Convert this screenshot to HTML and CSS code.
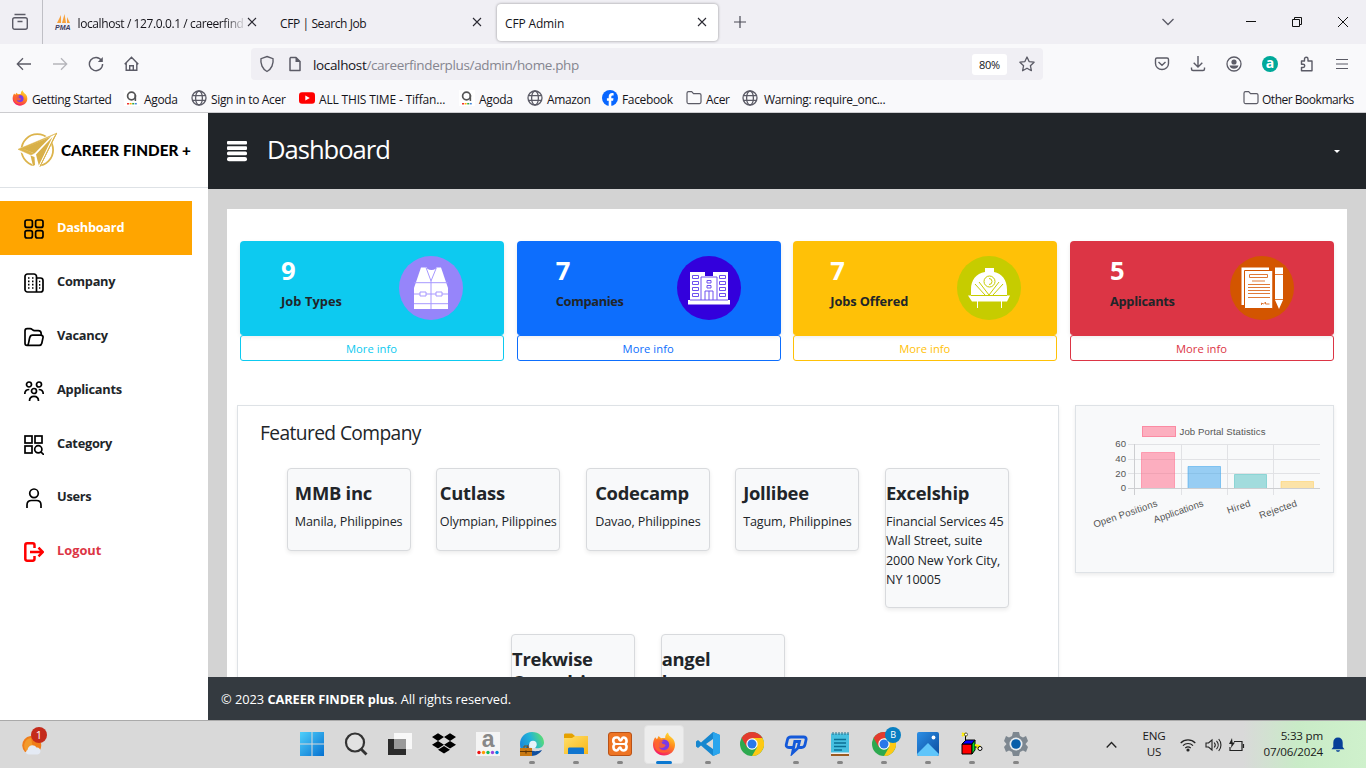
FILE: index.html
```html
<!DOCTYPE html>
<html lang="en">
<head>
<meta charset="utf-8">
<title>CFP Admin</title>
<link rel="stylesheet" href="styles.css">
</head>
<body>
<svg class="defs" width="0" height="0">
  <defs>
    <linearGradient id="gFox" x1="0.8" y1="0" x2="0.3" y2="1"><stop offset="0" stop-color="#ffe536"/><stop offset=".45" stop-color="#ff8a1c"/><stop offset="1" stop-color="#f5156c"/></linearGradient>
    <linearGradient id="gWin" x1="0" y1="0" x2="1" y2="1"><stop offset="0" stop-color="#4fd0fb"/><stop offset="1" stop-color="#0670d0"/></linearGradient>
    <linearGradient id="gEdge" x1="0" y1="0.6" x2="1" y2="0.2"><stop offset="0" stop-color="#1a86d8"/><stop offset=".5" stop-color="#22b4d8"/><stop offset="1" stop-color="#5fe06a"/></linearGradient>
    <linearGradient id="gFold" x1="0" y1="0" x2="1" y2="1"><stop offset="0" stop-color="#ffdf6b"/><stop offset="1" stop-color="#f8b617"/></linearGradient>
    <linearGradient id="gPhoto" x1="0" y1="0" x2="1" y2="1"><stop offset="0" stop-color="#2b8fe6"/><stop offset="1" stop-color="#0d4c9e"/></linearGradient>
    <symbol id="x" viewBox="0 0 10 10"><path d="M1 1l8 8M9 1L1 9" stroke="#2b2a33" stroke-width="1.1" fill="none"/></symbol>
    <symbol id="globe" viewBox="0 0 16 16"><g fill="none" stroke="#5b5b66" stroke-width="1.3"><circle cx="8" cy="8" r="7"/><ellipse cx="8" cy="8" rx="3.4" ry="7"/><path d="M1.5 5.7h13M1.5 10.3h13"/></g></symbol>
    <symbol id="folder" viewBox="0 0 16 16"><path d="M1 3.3C1 2.3 1.7 1.7 2.5 1.7h3.2l1.8 1.9h6c.9 0 1.5.6 1.5 1.5v7c0 .9-.6 1.5-1.5 1.5h-11c-.9 0-1.5-.6-1.5-1.5z" fill="none" stroke="#5b5b66" stroke-width="1.2"/></symbol>
    <symbol id="agoda" viewBox="0 0 16 16"><path fill="#fff" d="M0 0h16v16H0z"/><circle cx="7.500" cy="6" r="3.900" fill="none" stroke="#555" stroke-width="1.700"/><path d="M11.400 5v6" stroke="#555" stroke-width="1.500"/><path d="M3 13.700h2" stroke="#e33" stroke-width="1.500"/><path d="M5.600 13.700h2" stroke="#fa0" stroke-width="1.500"/><path d="M8.200 13.700h2" stroke="#3a4" stroke-width="1.500"/><path d="M10.800 13.700h2" stroke="#48d" stroke-width="1.500"/></symbol>
    <symbol id="fox" viewBox="0 0 24 24"><path d="M3.200 5.200L5 7.200 6.600 4 9 6.300C11 5.600 12 6 13.200 6 13 4 14 1.600 16 .5c.4 2.600 2 4 4 5.500 2.200 1.800 3.200 4.800 3 7.600C22.600 19.500 18 23.500 12 23.500S1.200 19 1 13.300C.9 10.200 1.700 7.300 3.200 5.200z" fill="url(#gFox)"/><circle cx="12" cy="12.800" r="5.300" fill="#7a3ae8"/><path d="M4 8c3-1 6-.2 8 1.200-2.200.2-2.800 1.300-1.700 2.300 1 .9 2.600.5 3.400 1.700-.8 2.600-5 3.700-7.500 1.600C7.500 19 14 20.500 17.500 17c-2 5-12.500 5.500-15-2.500z" fill="#ff652d" opacity=".85"/></symbol>
    <symbol id="chrome" viewBox="0 0 24 24"><circle cx="12" cy="12" r="12" fill="#2da94f"/><path d="M1.600 6l5.200 9 5.200-3V6z" fill="#e33b2e"/><path d="M12 6h10.400A12 12 0 0 1 12 24l5.200-9z" fill="#fdc914"/><path d="M1.600 6A12 12 0 0 1 22.400 6H12z" fill="#e33b2e"/><circle cx="12" cy="12" r="5.700" fill="#fff"/><circle cx="12" cy="12" r="4.500" fill="#2878ea"/></symbol>
  </defs>
</svg>

<div class="tabs">
  <div class="tab-view"><svg width="18" height="18" viewBox="0 0 18 18" fill="none" stroke="#5b5b66" stroke-width="1.400"><rect x="1.700" y="4.700" width="14.600" height="11.600" rx="2"/><path d="M3.500 1.500h11M6.500 8.500h5"/></svg></div>
  <div class="tab tab-pma">
    <svg width="17" height="16" viewBox="0 0 17 16"><path d="M2 9L6 1v8zM7 9L9.500 0 11 9zM12 9V3l3 6z" fill="#f7a13a"/></svg><i class="pma">PMA</i>
    <span class="fade">localhost / 127.0.0.1 / careerfind</span><svg width="10" height="10"><use href="#x"/></svg>
  </div>
  <div class="tab tab-search"><span>CFP | Search Job</span><svg width="10" height="10"><use href="#x"/></svg></div>
  <div class="tab tab-active"><span>CFP Admin</span><svg width="10" height="10"><use href="#x"/></svg></div>
  <svg class="plus" width="12" height="12" viewBox="0 0 12 12"><path d="M6 0v12M0 6h12" stroke="#4a4a55" stroke-width="1.200"/></svg>
  <div class="window-controls">
    <svg width="12" height="8" viewBox="0 0 12 8"><path d="M.5 1L6 6.500 11.500 1" fill="none" stroke="#5b5b66" stroke-width="1.300"/></svg>
    <svg width="10" height="10" viewBox="0 0 10 10"><path d="M0 4.500h10" stroke="#111"/></svg>
    <svg width="10" height="10" viewBox="0 0 10 10" fill="none" stroke="#111"><path d="M.5 2.500h7v7h-7zM2.500 2.500v-2h7v7h-2"/></svg>
    <svg width="10" height="10" viewBox="0 0 10 10"><path d="M0 0l10 10M10 0L0 10" stroke="#111"/></svg>
  </div>
</div>

<div class="navbar">
  <div class="nav-buttons">
    <svg width="16" height="16" viewBox="0 0 16 16" fill="none" stroke="#5b5b66" stroke-width="1.300"><path d="M15 8H1.500M7 2.300L1.300 8 7 13.700"/></svg>
    <svg width="16" height="16" viewBox="0 0 16 16" fill="none" stroke="#b5b5bb" stroke-width="1.300"><path d="M1 8h13.500M9 2.300L14.700 8 9 13.700"/></svg>
    <svg width="16" height="16" viewBox="0 0 16 16" fill="none" stroke="#5b5b66" stroke-width="1.400"><path d="M13.500 4.400A6.600 6.600 0 1 0 14.600 8"/><path d="M14.800 1v5H9.800z" fill="#5b5b66" stroke="none"/></svg>
    <svg width="16" height="16" viewBox="0 0 16 16" fill="none" stroke="#5b5b66" stroke-width="1.400"><path d="M.7 8.300L7.500 1.300l6.800 7M2.200 7v7.300h10.600V7M5.700 14V9.800h3.600V14"/></svg>
  </div>
  <div class="urlbar">
    <svg width="16" height="18" viewBox="0 0 16 18" fill="none" stroke="#5b5b66" stroke-width="1.400"><path d="M8 1.500l6 2.200c.8 5-1.500 10.500-6 12.800C3.500 14.200 1.200 8.700 2 3.700z"/></svg>
    <svg width="14" height="16" viewBox="0 0 14 16" fill="none" stroke="#5b5b66" stroke-width="1.500"><path d="M2.500 1.500H8L12 5.500v9H2v-12z" stroke-linejoin="round"/><path d="M7.500 1v5h5z" fill="#5b5b66" stroke="none"/></svg>
    <span class="url">localhost<span>/careerfinderplus/admin/home.php</span></span>
    <b class="zoom">80%</b>
    <svg width="16" height="16" viewBox="0 0 16 16"><path d="M8 1l2.100 4.600 5 .6-3.700 3.500 1 5L8 12.200l-4.400 2.500 1-5L.9 6.200l5-.6z" fill="none" stroke="#5b5b66" stroke-width="1.300" stroke-linejoin="round"/></svg>
  </div>
  <div class="nav-tools">
    <svg width="16" height="16" viewBox="0 0 16 16" fill="none" stroke="#5b5b66" stroke-width="1.400"><path d="M3 2h10c.9 0 1.500.6 1.500 1.500V7.500a6.500 6 0 0 1-13 0v-4C1.500 2.600 2.100 2 3 2zM4.500 6L8 9.200 11.500 6"/></svg>
    <svg width="16" height="16" viewBox="0 0 16 16" fill="none" stroke="#5b5b66" stroke-width="1.400"><path d="M8 0v11M3.700 6.800L8 11l4.300-4.200M1.500 11.500V13c0 .9.600 1.500 1.500 1.500h10c.9 0 1.500-.6 1.500-1.500v-1.500"/></svg>
    <svg width="16" height="16" viewBox="0 0 16 16"><circle cx="8" cy="8" r="7" fill="none" stroke="#5b5b66" stroke-width="1.300"/><circle cx="8" cy="6" r="2.600" fill="#5b5b66"/><path d="M3.500 9.500h9a4.700 4.500 0 0 1-9 0z" fill="#5b5b66"/></svg>
    <b class="ext">a</b>
    <svg width="16" height="16" viewBox="0 0 16 16" fill="none" stroke="#5b5b66" stroke-width="1.400"><path d="M3.500 5h3V3A1.700 1.700 0 0 1 10 3v2h4v9.700H3.500v-3.200h1.600a1.600 1.600 0 0 0 0-3.300H3.500z" stroke-linejoin="round"/></svg>
    <svg width="12" height="12" viewBox="0 0 12 12"><path d="M0 1.500h12M0 6h12M0 10.500h12" stroke="#5b5b66" stroke-width="1.200"/></svg>
  </div>
</div>

<div class="bookmarks">
  <a><svg width="16" height="16"><use href="#fox"/></svg>Getting Started</a>
  <a><svg width="16" height="16"><use href="#agoda"/></svg>Agoda</a>
  <a><svg width="16" height="16"><use href="#globe"/></svg>Sign in to Acer</a>
  <a class="video"><svg width="16" height="16" viewBox="0 0 16 16"><rect y="2.200" width="16" height="11.600" rx="3" fill="#f00"/><path d="M6.300 5.500v5L10.800 8z" fill="#fff"/></svg>ALL THIS TIME - Tiffan...</a>
  <a><svg width="16" height="16"><use href="#agoda"/></svg>Agoda</a>
  <a><svg width="16" height="16"><use href="#globe"/></svg>Amazon</a>
  <a><svg width="16" height="16" viewBox="0 0 16 16"><circle cx="8" cy="8" r="8" fill="#0866ff"/><path d="M6.700 16v-5.200H4.900V8.200h1.800V7c0-2.600 1.300-3.900 3.500-3.900.5 0 1 .1 1.400.2v2.200h-1C9.600 5.500 9.300 6 9.300 7v1.200h2.200l-.4 2.600H9.300V16z" fill="#fff"/></svg>Facebook</a>
  <a><svg width="16" height="16"><use href="#folder"/></svg>Acer</a>
  <a class="wide"><svg width="16" height="16"><use href="#globe"/></svg>Warning: require_onc...</a>
  <a class="other"><svg width="16" height="16"><use href="#folder"/></svg>Other Bookmarks</a>
</div>

<div class="page">
  <aside class="sidebar">
    <div class="brand">
      <svg width="40" height="36" viewBox="0 0 40 36"><circle cx="19.300" cy="18" r="15.800" fill="none" stroke="#dcb44c" stroke-width="1.800"/><path d="M-1 17.500L40 -1 22 36h-6l-5-10z" fill="#fff"/><path d="M0 17.300L38.700 1.200 30 5.500 6 17l10 4.500-3 1.500z" fill="#dcb44c" stroke="#dcb44c" stroke-width=".5"/><path d="M5 16.700L33 4.500 16.500 21.500z" fill="#d8b048"/><path d="M34.500 5L18 22.500l2.800 11z" fill="#d8b048"/><path d="M38.700 1.200L22 34.500l14-29z" fill="#dcb44c" stroke="#dcb44c"/><path d="M12.500 23.500l4 1.500.5 8-2 1z" fill="#d8b048"/></svg>
      <span>CAREER FINDER +</span>
    </div>
    <nav>
      <a class="active"><svg viewBox="0 0 20 20"><rect x="1" y="1" width="7.400" height="7.400" rx="2"/><rect x="11.600" y="1" width="7.400" height="7.400" rx="2"/><rect x="1" y="11.600" width="7.400" height="7.400" rx="2"/><rect x="11.600" y="11.600" width="7.400" height="7.400" rx="2"/></svg>Dashboard</a>
      <a><svg viewBox="0 0 20 20"><path d="M12.500 19H3.500A2.500 2.500 0 0 1 1 16.500v-13A2.500 2.500 0 0 1 3.500 1h6.500a2.500 2.500 0 0 1 2.500 2.500zM12.500 5h4A2.500 2.500 0 0 1 19 7.500v9a2.500 2.500 0 0 1-2.500 2.500h-4"/><path d="M4 5h1.500M8 5h1.500M4 8.300h1.500M8 8.300h1.500M4 11.600h1.500M8 11.600h1.500M4 15h1.500M8 15h1.500M15 8.500h1.300M15 11.800h1.300M15 15h1.300"/></svg>Company</a>
      <a><svg viewBox="0 0 20 20"><path d="M3 18.300C1.800 18.300 1 17.500 1 16.200V4C1 2.700 2 1.700 3.200 1.700h3c2 0 2.300 2 4.300 2h3.700c1.800 0 3 1.200 3 3V8M3 18.300c1.700 0 1.300-1.300 2.600-7.300C6.200 8.600 7 8.200 8.500 8.200h8.300c1.600 0 2.500 1 2.200 2.500l-1.200 5.600c-.3 1.300-1.200 2-2.500 2z"/></svg>Vacancy</a>
      <a><svg viewBox="0 0 20 20"><circle cx="5" cy="3.500" r="2.500"/><circle cx="15" cy="3.500" r="2.500"/><circle cx="10" cy="10" r="2.500"/><path d="M.8 13c0-3.500 1.500-4.500 4.500-4.500M19.200 13c0-3.500-1.500-4.500-4.500-4.500M5.500 20c0-3.500 1.500-4.700 4.500-4.700s4.500 1.200 4.500 4.700"/></svg>Applicants</a>
      <a><svg viewBox="0 0 20 20"><rect x="1" y="1" width="7" height="7"/><rect x="11" y="1" width="7" height="7"/><rect x="1" y="11" width="7" height="7"/><circle cx="14.300" cy="14.300" r="3.600"/><path d="M17 17l3 3"/></svg>Category</a>
      <a><svg viewBox="0 0 20 20"><circle cx="10" cy="5.300" r="4.300"/><path d="M3 20v-3c0-3 1.500-4.500 4.500-4.500h5c3 0 4.500 1.500 4.500 4.500v3"/></svg>Users</a>
      <a class="logout"><svg viewBox="0 0 20 20"><path d="M10.500 6V3.200C10.500 2 9.800 1.300 8.700 1.300H3.200C2 1.300 1.300 2 1.300 3.200v13.600c0 1.200.7 1.900 1.900 1.900h5.500c1.100 0 1.800-.7 1.800-1.900V14M6 10h12.500M14.500 5.700L18.800 10l-4.300 4.300"/></svg>Logout</a>
    </nav>
  </aside>
  <main>
    <header>
      <svg width="20" height="21" viewBox="0 0 20 21" fill="#fff"><rect width="20" height="3.400" rx="1"/><rect y="5.300" width="20" height="3.600" rx="1"/><rect y="10.500" width="20" height="3.700" rx="1.500"/><rect y="16" width="20" height="4.300" rx="2"/></svg>
      <h1>Dashboard</h1>
      <i class="caret"></i>
    </header>
    <section class="panel">
      <div class="stats">
        <div class="stat types"><div class="tile"><div><strong>9</strong><b>Job Types</b></div>
          <svg viewBox="0 0 64 64"><circle cx="32" cy="32" r="32" fill="#9685fa"/><path d="M22 11.500h20l7 20.500v21H15V32z" fill="#fff"/><path d="M27 11.500l5 13.500 5.500-13.500M32 25v28M15 26.700h34M15 38h34M15 47.700h34" fill="none" stroke="#a798ff"/><path d="M28 10.500h9v2q-4.500 3-9 0z" fill="#9685fa"/><path d="M21 36h6v4h-6zM37 36h6v4h-6z" fill="#fff" stroke="#a798ff"/></svg></div><a>More info</a></div>
        <div class="stat companies"><div class="tile"><div><strong>7</strong><b>Companies</b></div>
          <svg viewBox="0 0 64 64"><circle cx="32" cy="32" r="32" fill="#3300dc"/><path d="M13 16h15v4h8v-4h15v28h2v4.500H11V44h2z" fill="#fff"/><g fill="none" stroke="#6e50f0"><path d="M24 44V21h16v23M28 44V35h8v9M32 35v9M13 44h38"/><path d="M15.500 19.500h6v3h-6zM15.500 25.500h6v3h-6zM15.500 31.500h6v3h-6zM15.500 37.500h6v3h-6zM42.500 19.500h6v3h-6zM42.500 25.500h6v3h-6zM42.500 31.500h6v3h-6zM42.500 37.500h6v3h-6zM30 24.500h4v2.500h-4zM30 29.500h4v2.500h-4z"/></g></svg></div><a>More info</a></div>
        <div class="stat offered"><div class="tile"><div><strong>7</strong><b>Jobs Offered</b></div>
          <svg viewBox="0 0 64 64"><circle cx="32" cy="32" r="32" fill="#c6cc00"/><path d="M28 12h9v4c8 1.500 13 8 13 17.500v6h3l-3 6H15l-4-6h3v-6C14 24 19 17.500 28 16z" fill="#fff"/><g fill="none" stroke="#c6cc00"><circle cx="32.500" cy="25.500" r="5.500"/><path d="M32 22.500a3 3 0 1 1 0 6M14 39.500h36M18 28l10 11M22 26l10 13 10-13M46 28L36 39"/></g><path d="M20.500 45v7M44.500 45v7" stroke="#fff"/></svg></div><a>More info</a></div>
        <div class="stat applicants"><div class="tile"><div><strong>5</strong><b>Applicants</b></div>
          <svg viewBox="0 0 64 64"><circle cx="32" cy="32" r="32" fill="#d35500"/><path d="M11.500 11.500H39V49H11.500zM45 11.500h8V44l-4 9-4-9z" fill="#fff"/><path d="M14.500 14.500h28.300v38H14.500z" fill="#fff" stroke="#d35500"/><g fill="none" stroke="#df7a38"><path d="M19.500 18.500h18v3h-18zM22 25h13M18 28.500h22M18 31.500h22M18 34.500h22M18 37.500h22M18 41.500h22M31.500 49v-2l2 1 2-2v2h4M45 18.500h8M45 43.500h8"/></g></svg></div><a>More info</a></div>
      </div>
      <div class="lower">
        <div class="featured">
          <h2>Featured Company</h2>
          <div class="cards">
            <div class="card"><div><h3>MMB inc</h3><p>Manila, Philippines</p></div></div>
            <div class="card"><div><h3>Cutlass</h3><p>Olympian, Pilippines</p></div></div>
            <div class="card"><div><h3>Codecamp</h3><p>Davao, Philippines</p></div></div>
            <div class="card"><div><h3>Jollibee</h3><p>Tagum, Philippines</p></div></div>
            <div class="card full"><div><h3>Excelship</h3><p>Financial Services 45<br>Wall Street, suite<br>2000 New York City,<br>NY 10005</p></div></div>
            <div class="card full"><div><h3>Trekwise<br>Consulting</h3></div></div>
            <div class="card full"><div><h3>angel<br>burger</h3></div></div>
          </div>
        </div>
        <div class="chart">
          <svg width="257" height="166" viewBox="1076 406 257 166">
            <rect x="1142.500" y="426.500" width="33" height="10" fill="#fcafbf" stroke="#fb8ba3"/>
            <text x="1179.500" y="435" textLength="86">Job Portal Statistics</text>
            <g class="axis"><text x="1126" y="447">60</text><text x="1126" y="462">40</text><text x="1126" y="477">20</text><text x="1126" y="491">0</text></g>
            <path d="M1128 444.500h192M1128 459.500h192M1128 473.500h192M1181.500 444v51M1227.500 444v51M1273.500 444v51" stroke="#e1e2e5" fill="none"/>
            <path d="M1134.500 444v51M1128 488.500h192" stroke="#cdced1" fill="none"/>
            <g stroke-width="1"><path d="M1141.500 488v-35.500h33V488" fill="#ff638480" stroke="#ff638480"/><path d="M1188 488v-21.500h32.500V488" fill="#36a2eb80" stroke="#36a2eb80"/><path d="M1234.500 488v-13.500h32V488" fill="#4bc0c080" stroke="#4bc0c080"/><path d="M1281 488v-6.500h32.500V488" fill="#ffce5680" stroke="#ffce5680"/></g>
            <g class="axis"><text transform="translate(1158 506) rotate(-19)" textLength="67">Open Positions</text><text transform="translate(1204 506) rotate(-19)" textLength="52">Applications</text><text transform="translate(1251 506) rotate(-19)" textLength="24">Hired</text><text transform="translate(1297.500 506) rotate(-19)" textLength="39">Rejected</text></g>
          </svg>
        </div>
      </div>
    </section>
    <footer>© 2023 <b>CAREER FINDER plus</b>. All rights reserved.</footer>
  </main>
</div>

<div class="taskbar">
  <div class="weather"><svg width="26" height="26" viewBox="0 0 26 26"><path d="M4 20A9.500 9.500 0 1 1 19 18z" fill="#ef7d1a"/><path d="M10 6a8 8 0 0 0-5 13l8 2z" fill="#f39a2b"/><path d="M8 22.500c-3 0-4-3-1.500-4.500C7 13 13 11.500 15.500 15.500c4-1 6 6 1 7z" fill="#e4eaf4"/></svg><b>1</b></div>
  <div class="apps">
    <a><svg viewBox="0 0 24 24"><path d="M0 0h11.500v11.500H0zM12.500 0H24v11.500H12.500zM0 12.500h11.500V24H0zM12.500 12.500H24V24H12.500z" fill="url(#gWin)"/></svg></a>
    <a><svg viewBox="0 0 24 24"><circle cx="11" cy="10.500" r="9" fill="#e2e2e2" stroke="#333" stroke-width="2.200"/><path d="M17.500 17.500l5 5" stroke="#333" stroke-width="2.800"/></svg></a>
    <a><svg viewBox="0 0 24 24"><path d="M6 1h18v16H6z" fill="#f8f8f8"/><path d="M0 7h18v16H0z" fill="#2b2b2b"/><path d="M6 7h12v10H6z" fill="#9a9a9a"/></svg></a>
    <a><svg viewBox="0 0 24 24"><path d="M6 1.300l6 3.800-6 3.800-6-3.800zM18 1.300l6 3.800-6 3.800-6-3.800zM6 9l6 3.800-6 3.800-6-3.800zM18 9l6 3.800-6 3.800-6-3.800zM12 14l6 3.800-6 3.800-6-3.800z"/></svg></a>
    <a class="amazon"><b>a</b><svg viewBox="0 0 24 6"><circle cx="3" cy="2.500" r="1.700" fill="#e11"/><circle cx="7.500" cy="2.500" r="1.700" fill="#f90"/><circle cx="12" cy="2.500" r="1.700" fill="#1b5"/><circle cx="16.500" cy="2.500" r="1.700" fill="#94d"/><circle cx="21" cy="2.500" r="1.700" fill="#08d"/></svg></a>
    <a class="run"><svg viewBox="0 0 24 24"><path d="M0 12C0 5 5 0 12 0s12 5 12 10.500c0 5-5 6.500-9 5.500 1-2 0-5-3-5-4 0-6 6-3 13C4 23 0 19 0 12z" fill="url(#gEdge)"/><path d="M9 12c-2 6 4 9 13 6-3 5-8 6-12 6-5-3-5-9-1-12z" fill="#104f9e"/><circle cx="13" cy="12.500" r="3.700" fill="#e7f3fa"/><path d="M0 16h12v8H0z" fill="#c87914"/><path d="M0 19.500h12M6 18.500v3" stroke="#5b3305" stroke-width="1.200"/><path d="M4 16v-2h4v2" stroke="#8a5109" fill="none"/></svg></a>
    <a class="run"><svg viewBox="0 0 24 24"><path d="M0 3c0-1 .5-1.500 1.500-1.500H8L11 4h13v18H0z" fill="#e5a100"/><path d="M0 6h8l3-2h13v18H0z" fill="url(#gFold)"/><path d="M4 22v-5c0-1 .5-1.500 1.500-1.500h13c1 0 1.500.5 1.500 1.500v5z" fill="#1075cf"/></svg></a>
    <a class="run"><svg viewBox="0 0 24 24"><rect x=".5" y=".5" width="23" height="23" rx="2.500" fill="#ee7423" stroke="#b95217"/><path d="M8 5.500h1.500c2 0 1.500 3 3 3s1-3 3-3c3.500 0 4 5 1.500 6.500 2.500 1.500 2 6.500-1.500 6.500s-2-3-3.500-3-1.500 3-3.500 3c-3.500 0-4-5-1.500-6.500-2.500-1.500-2.500-6.500 1-6.500z" fill="none" stroke="#fff" stroke-width="2.600"/><path d="M8 12h8" stroke="#fff" stroke-width="2"/></svg></a>
    <a class="run current"><svg viewBox="0 0 24 24"><use href="#fox"/></svg></a>
    <a class="run"><svg viewBox="0 0 24 24"><path d="M17 0l7 3v18l-7 3L5 13.500 2 16l-2-1.500V9.500L2 8l3 2.500zM17 7l-7 5 7 5z" fill="#1787cf" fill-rule="evenodd"/><path d="M17 0l7 3v18l-7 3z" fill="#2aa5ed"/></svg></a>
    <a><svg viewBox="0 0 24 24"><use href="#chrome"/></svg></a>
    <a class="run"><svg viewBox="0 0 24 24"><path d="M9 15.500H5C2.500 15.500 2 14 2.300 12.500L3.500 7.500c.5-2 1.500-2.500 3.500-2.500h12.500c2 0 3 1 2.500 3l-1 4.500c-.5 2.500-1.500 3-3.500 3H14l1.500-6h-4.700L8.500 21l6-5.500" fill="none" stroke="#1459d9" stroke-width="2.800"/></svg></a>
    <a class="run"><svg viewBox="0 0 24 24"><path d="M3 1.500h18V22H3z" fill="#46bfe0"/><path d="M3 21h18v3H3z" fill="#9a5b21"/><path d="M3 20.500h18V22H3z" fill="#eee"/><path d="M6 7.500h12M6 11h12M6 14.500h12M6 18h8" stroke="#0b6f94" stroke-width="1.500"/><path d="M5 0v3M8 0v3M11 0v3M14 0v3M17 0v3M20 0v3" stroke="#26708c"/></svg></a>
    <a class="run"><svg viewBox="0 0 24 24"><use href="#chrome"/></svg><b class="profile">B</b></a>
    <a class="run"><svg viewBox="0 0 24 24"><rect x="1" width="22" height="24" rx="2" fill="url(#gPhoto)"/><path d="M1 22L12 11l11 11c0 1-1 2-2 2H3c-1 0-2-1-2-2z" fill="#5fc5fa"/><circle cx="17.500" cy="5.500" r="1.900" fill="#fff"/></svg></a>
    <a class="run"><svg viewBox="0 0 24 24"><path d="M2 12h10v10H2z" fill="#f00" stroke="#000"/><path d="M2 12l4-4h9l-3 4z" fill="#00f" stroke="#000"/><path d="M12 12l3-4v10l-3 4z" fill="#0d2" stroke="#000"/><path d="M5.500 9V4M15 15h4" stroke="#000"/><path d="M2 1l5 3M2 4l4-3" stroke="#fe0" stroke-width="2"/><circle cx="6" cy="2.500" r="1.500" fill="#fff" stroke="#000" stroke-width=".6"/><path d="M15 13l4 1-2 3" fill="none" stroke="#fe0" stroke-width="2"/><circle cx="20" cy="16.500" r="2" fill="#fff" stroke="#000"/></svg></a>
    <a class="run"><svg viewBox="0 0 24 24"><path d="M9 0h6l1 4 3 1.500L22 4l2 5-2.500 3 2.500 3-2 5-3-1.500L16 20l-1 4H9l-1-4-3-1.500L2 20l-2-5 2.500-3L0 9l2-5 3 1.500L8 4z" fill="#7d8790"/><circle cx="12" cy="12" r="6.500" fill="#e9edf0"/><circle cx="12" cy="12" r="4.800" fill="#075eaa"/></svg></a>
  </div>
  <div class="tray">
    <svg width="11" height="8" viewBox="0 0 11 8"><path d="M.7 6.500l4.800-5 4.800 5" fill="none" stroke="#222" stroke-width="1.300"/></svg>
    <span class="lang">ENG<br>US</span>
    <svg width="16" height="14" viewBox="0 0 16 14" fill="none" stroke="#222" stroke-width="1.200"><path d="M.7 5a10.300 10.300 0 0 1 14.600 0M3 7.600a7 7 0 0 1 10 0M5.300 10a4 4 0 0 1 5.400 0"/><circle cx="8" cy="12" r="1" fill="#222"/></svg>
    <svg width="17" height="14" viewBox="0 0 17 14" fill="none" stroke="#222" stroke-width="1.100"><path d="M1 5v4h2.500L7 12V2L3.500 5zM9.200 4.500c1.300 1.500 1.300 3.500 0 5M11.500 2.800c2.200 2.500 2.200 6 0 8.400M13.700 1c3 3.500 3 8.500 0 12"/></svg>
    <svg width="17" height="14" viewBox="0 0 17 14" fill="none" stroke="#222" stroke-width="1.200"><path d="M6 3.500h8v9H2V9M15.500 6v4"/><path d="M4 0L1 6h2.500L3 10l4-5.500H4.500z" fill="#222" stroke="none"/></svg>
    <span class="clock">5:33 pm<br>07/06/2024</span>
    <svg width="14" height="16" viewBox="0 0 14 16"><path d="M7 .5c3 0 4.700 2 4.700 5V10l1.800 2.300H.5L2.300 10V5.500C2.300 2.500 4 .5 7 .5zM5 13.300h4c-.4 2-3.600 2-4 0z" fill="#063f98"/></svg>
  </div>
</div>
</body>
</html>
```
FILE: styles.css
```css
* { box-sizing: border-box; }
body { margin: 0; width: 1366px; height: 768px; overflow: hidden; font: 12px "Open Sans", "Noto Sans", sans-serif; color: #15141a; display: flex; flex-direction: column; white-space: nowrap; }
svg { display: block; flex: none; }
.defs { position: absolute; }
h1, h2, h3, p { margin: 0; }

.tabs { height: 44px; flex: none; background: #f0eff4; display: flex; align-items: center; letter-spacing: -.4px; }
.tab-view { width: 43px; height: 44px; padding: 13px 0 0 11px; border-right: 1px solid #bfbfc5; }
.tab { display: flex; align-items: center; justify-content: space-between; height: 38px; }
.tab span { padding-top: 2px; }
.tab-pma { position: relative; width: 214px; padding-left: 12px; margin-right: 23px; }
.tab-pma .fade { width: 169px; margin-left: 5px; -webkit-mask-image: linear-gradient(90deg, #000 86%, transparent); mask-image: linear-gradient(90deg, #000 86%, transparent); }
.pma { position: absolute; left: 12px; top: 20px; font: italic 900 7px/9px "Liberation Sans", sans-serif; letter-spacing: 0; color: #3f3c60; }
.tab-search { width: 202px; margin-right: 15px; }
.tab-active { width: 221px; height: 37px; padding: 0 11px 0 8px; background: #fff; border-radius: 4px; box-shadow: 0 0 3px rgba(0,0,0,.4); }
.tab-active span { letter-spacing: -.15px; }
.plus { margin-left: 16px; }
.window-controls { margin-left: auto; display: flex; align-items: center; padding-right: 18px; }
.window-controls svg + svg { margin-left: 36px; }
.window-controls svg:nth-child(2) { margin-left: 72px; }

.navbar { height: 40px; flex: none; background: #f9f9fb; display: flex; align-items: center; }
.nav-buttons { display: flex; gap: 20px; padding-left: 16px; width: 251px; }
.urlbar { width: 792px; height: 32px; border-radius: 4px; background: #f0eff4; display: flex; align-items: center; padding: 0 8px; font-size: 13.500px; letter-spacing: -.35px; }
.urlbar svg + svg { margin-left: 13px; }
.url { margin-left: 11px; flex: 1; padding-top: 2px; }
.url span { color: #85858f; }
.zoom { width: 35px; height: 21px; border-radius: 3px; background: #fff; font: 11px/21px "Open Sans", sans-serif; text-align: center; letter-spacing: -.3px; margin-right: 12px; }
.nav-tools { margin-left: 111px; display: flex; align-items: center; gap: 20px; }
.nav-tools svg:last-child { margin-left: 2px; }
.ext { width: 16px; height: 16px; border-radius: 8px; background: #00a99a; color: #fff; font: bold 14px/14px "Open Sans", sans-serif; text-align: center; }

.bookmarks { height: 29px; flex: none; background: #f9f9fb; border-bottom: 1px solid #cccccf; display: grid; grid-template-columns: 112px 67px 108px 160px 68px 75px 84px 56px 501px 112px; padding: 2px 0 0 12px; align-items: center; letter-spacing: -.35px; }
.bookmarks a { display: flex; align-items: center; gap: 4px; }
.bookmarks svg { margin-top: -2px; }
.bookmarks .wide { gap: 6px; }
.bookmarks .video { letter-spacing: -.17px; }
.bookmarks .other { gap: 3px; letter-spacing: -.48px; }

.page { height: 607px; flex: none; display: flex; }
.sidebar { width: 208px; background: #fff; }
.brand { height: 75px; border-bottom: 1px solid #dee2e6; padding-left: 18px; display: flex; align-items: center; font: 900 15.300px "Lato", sans-serif; color: #000; }
.brand span { margin-left: 3px; letter-spacing: 0; }
.sidebar nav { padding-top: 13px; display: grid; grid-auto-rows: 53.900px; width: 192px; }
.sidebar nav a { padding: 0 0 2px 24px; display: flex; align-items: center; gap: 13px; font-size: 12.800px; font-weight: bold; color: #212529; letter-spacing: -.27px; }
.sidebar nav svg { width: 20px; height: 20px; margin-top: 4px; fill: none; stroke: #000; stroke-width: 1.700; }
.sidebar nav .active { background: orange; color: #fff; }
.sidebar nav .logout { color: #dc3545; letter-spacing: 0; }
.sidebar nav .logout svg { stroke: red; stroke-width: 2.500; }

main { width: 1158px; background: #d3d3d3; display: flex; flex-direction: column; color: #212529; }
header { height: 76px; flex: none; background: #212529; color: #fff; display: flex; align-items: center; padding: 0 26px 0 19px; }
header h1 { font-size: 25.600px; font-weight: 400; margin: -2px 0 0 20px; line-height: 40px; letter-spacing: -1.030px; }
.caret { margin-left: auto; border: 3px solid transparent; border-top-color: #fff; border-bottom: 0; }
.panel { margin: 20px 19px 0; height: 468px; flex: none; overflow: hidden; background: #fff; padding: 32px 10px 0; }
.stats { display: grid; grid-template-columns: repeat(4, 264px); justify-content: space-between; padding: 0 3px; }
.tile { height: 94px; border-radius: 4px 4px 3px 3px; background: var(--c); display: grid; grid-template-columns: var(--icon) 64px; padding: 15px 0 0 var(--left); box-shadow: 0 2px 4px rgba(0,0,0,.08); }
.tile svg { width: 64px; height: 64px; }
.tile strong { display: block; font-size: 25.600px; line-height: 30px; color: #fff; }
.tile b { display: block; font-size: 12.800px; line-height: 20px; margin-top: 5px; letter-spacing: -.1px; }
.stat a { display: block; height: 26px; border: 1px solid var(--c); border-radius: 3px; color: var(--c); text-align: center; font-size: 11.200px; line-height: 26px; padding-right: 1px; letter-spacing: .05px; }
.types { --c: #0dcaf0; --left: 41px; --icon: 118px; }
.types b { letter-spacing: .08px; }
.companies { --c: #0d6efd; --left: 39px; --icon: 121px; }
.companies b { letter-spacing: -.3px; }
.offered { --c: #ffc107; --left: 37px; --icon: 127px; }
.applicants { --c: #dc3545; --left: 40px; --icon: 120px; }
.applicants b { letter-spacing: -.28px; }
.lower { display: flex; justify-content: space-between; align-items: flex-start; margin-top: 44px; padding-right: 3px; }
.featured { width: 822px; height: 400px; border: 1px solid #dee2e6; box-shadow: 0 2px 4px rgba(0,0,0,.06); padding-top: 13px; }
.featured h2 { margin-left: 22px; font-size: 19.200px; line-height: 27px; height: 28px; font-weight: 400; letter-spacing: -.6px; }
.cards { display: flex; flex-wrap: wrap; justify-content: center; align-items: flex-start; padding: 8px .3px 0 0; }
.card { width: 124px; margin: 12.800px; min-height: 83px; border: 1px solid #d8dadd; border-radius: 4px; background: #f8f9fa; box-shadow: 0 2px 4px rgba(0,0,0,.08); padding: 13px 0 18px; display: flex; justify-content: center; }
.card h3 { font-size: 18.400px; line-height: 22.500px; letter-spacing: -.25px; margin-bottom: 7.500px; }
.card p { font-size: 12.600px; line-height: 19.400px; letter-spacing: -.13px; }
.card.full { justify-content: flex-start; }
.chart { width: 259px; height: 168px; border: 1px solid #dee2e6; background: #f8f9fa; box-shadow: 0 2px 4px rgba(0,0,0,.08); }
.chart text { font: 9.600px "Liberation Sans", sans-serif; fill: #555; }
.chart .axis text { text-anchor: end; }
footer { height: 43px; flex: none; background: #343a40; color: #fff; padding: 1px 0 0 13px; font-size: 12.800px; line-height: 43px; letter-spacing: -.02px; }
footer b { letter-spacing: -.1px; }

.taskbar { height: 48px; flex: none; border-top: 1px solid #aaa; background: linear-gradient(90deg, #d9d9d9 91%, #c9ebc7 95%, #cff1cc); display: flex; align-items: center; }
.weather { position: relative; width: 290px; padding-left: 21px; }
.weather b { position: absolute; left: 31px; top: -5px; width: 16px; height: 16px; border-radius: 8px; background: #c42b1c; color: #fff; font: 11px/16px "Open Sans", sans-serif; text-align: center; }
.apps { display: grid; grid-template-columns: repeat(17, 44.030px); height: 47px; width: 811px; }
.apps a { position: relative; display: flex; justify-content: center; padding-top: 11px; }
.apps svg { width: 24px; height: 24px; }
.run::after { content: ""; position: absolute; bottom: 4px; left: 19px; width: 6px; height: 3px; border-radius: 2px; background: #858585; }
.current::before { content: ""; position: absolute; inset: 4px 2px 4px; border-radius: 4px; background: #ededed; border: 1px solid #e3e3e3; }
.current svg { position: relative; }
.current::after { left: 14px; width: 16px; background: #0b78d0; }
.apps .amazon { flex-direction: column; align-items: center; justify-content: flex-start; }
.amazon b { width: 24px; height: 18px; background: #f4f4f4; color: #888; font: bold 23px/15px "Liberation Sans", sans-serif; text-align: center; }
.apps .amazon svg { height: 6px; background: #f4f4f4; }
.profile { position: absolute; left: 23px; top: 6px; width: 16px; height: 16px; border-radius: 8px; background: #087fc2; color: #fff; font: 9px/16px "Open Sans", sans-serif; text-align: center; }
.tray { flex: 1; display: grid; grid-template-columns: 26px 44px 25px 23px 26px 77px 14px; padding-left: 5px; align-items: center; font-size: 11.600px; line-height: 16px; letter-spacing: -.2px; color: #1a1a1a; }
.tray svg:nth-child(n+3) { margin-left: 4px; }
.lang { text-align: center; position: relative; top: -1px; }
.clock { text-align: right; padding-right: 4px; position: relative; top: -1px; }
```
